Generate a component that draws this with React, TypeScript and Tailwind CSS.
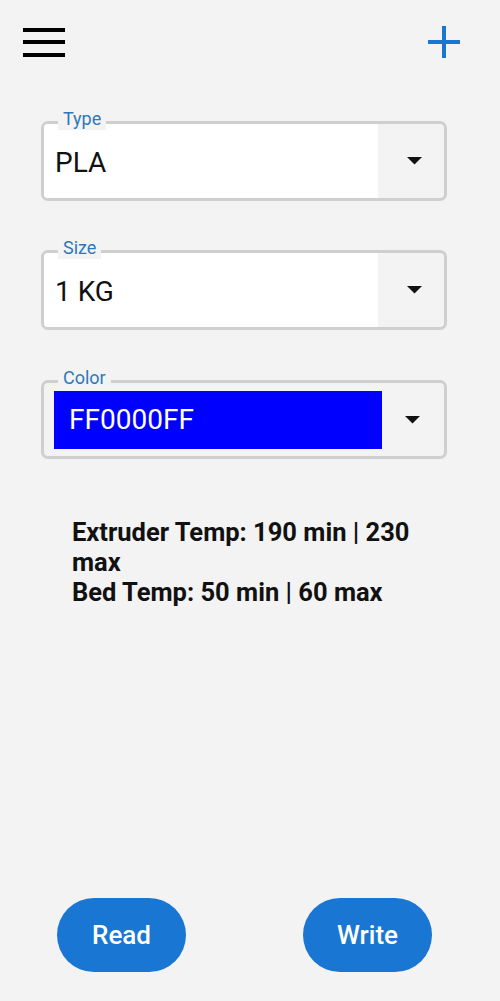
const Arrow = () => (
  <svg width="15" height="8" viewBox="0 0 15 8" className="block">
    <path d="M0 0 L15 0 L7.5 7.5 Z" fill="#111" />
  </svg>
)

const Field = ({ value }: { value: string }) => (
  <div className="ml-[41px] w-[406px] h-[80px] border-[3px] border-[#cfcfcf] rounded-[7px] flex overflow-hidden">
    <div className="flex-1 bg-white flex items-center pl-[11px] pt-[3px] text-[28px] text-[#111]">{value}</div>
    <div className="w-[66px] flex items-center justify-center pl-[6px]">
      <Arrow />
    </div>
  </div>
)

const Label = ({ text }: { text: string }) => (
  <span className="absolute z-10 left-[58px] -top-[13px] px-[5px] bg-[#f3f3f3] text-[18px] leading-[22px] text-[#2f78b9]">
    {text}
  </span>
)

export default function App() {
  return (
    <div
      className="w-[500px] h-[1001px] bg-[#f3f3f3] flex flex-col"
      style={{ fontFamily: 'Roboto, "Noto Sans", sans-serif' }}
    >
      <div className="flex items-center justify-between pl-[23px] pr-[39px] pt-[26px] h-[58px]">
        <div className="flex flex-col gap-[8.5px] w-[42px]">
          <div className="h-[4px] bg-black" />
          <div className="h-[4px] bg-black" />
          <div className="h-[4px] bg-black" />
        </div>
        <svg width="34" height="34" viewBox="0 0 34 34">
          <path d="M17 1 V33 M1 17 H33" stroke="#1976d2" strokeWidth="4" />
        </svg>
      </div>

      <div className="relative mt-[63px]">
        <Label text="Type" />
        <Field value="PLA" />
      </div>

      <div className="relative mt-[49px]">
        <Label text="Size" />
        <Field value="1 KG" />
      </div>

      <div className="relative mt-[50px]">
        <Label text="Color" />
        <div className="ml-[41px] w-[406px] h-[79px] border-[3px] border-[#cfcfcf] rounded-[7px] flex items-center">
          <div className="ml-[10px] w-[328px] h-[58px] bg-[#0000ff] flex items-center pl-[15px] text-[28px] text-white">
            FF0000FF
          </div>
          <div className="flex-1 flex items-center justify-center pr-[2px]">
            <Arrow />
          </div>
        </div>
      </div>

      <div className="ml-[72px] w-[350px] mt-[58px] text-[25.5px] leading-[30px] font-bold text-[#111]">
        <p>Extruder Temp: 190 min | 230 max</p>
        <p>Bed Temp: 50 min | 60 max</p>
      </div>

      <div className="mt-auto mb-[29px] flex pl-[57px] gap-[117px]">
        <button className="w-[129px] h-[74px] rounded-full bg-[#1976d2] text-white text-[26px] font-medium">
          Read
        </button>
        <button className="w-[129px] h-[74px] rounded-full bg-[#1976d2] text-white text-[26px] font-medium">
          Write
        </button>
      </div>
    </div>
  )
}
